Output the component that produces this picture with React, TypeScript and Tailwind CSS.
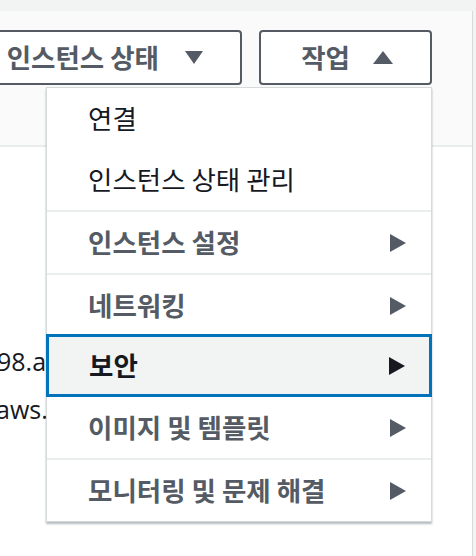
import React from "react";

const Down = () => (
  <svg width="18" height="13" viewBox="0 0 18 13" className="shrink-0">
    <polygon points="0,0 18,0 9,13" fill="#545b64" />
  </svg>
);
const Up = () => (
  <svg width="20" height="13" viewBox="0 0 20 13" className="shrink-0">
    <polygon points="0,13 20,13 10,0" fill="#545b64" />
  </svg>
);
const Right = ({ color }: { color: string }) => (
  <svg width="16" height="18" viewBox="0 0 16 18" className="shrink-0">
    <polygon points="0,0 16,9 0,18" fill={color} />
  </svg>
);

type Item = { label: string; sub?: boolean; active?: boolean };

const MenuItem = ({ item }: { item: Item }) => {
  if (item.active) {
    return (
      <div className="-mx-px h-[63px] -mt-[2px] flex items-center justify-between pl-[40px] pr-[24px] bg-[#f2f3f3] border-[3px] border-[#0073bb] text-[#16191f] font-bold">
        <span>{item.label}</span>
        <Right color="#16191f" />
      </div>
    );
  }
  return (
    <div
      className={
        "h-[61px] flex items-center justify-between pl-[41px] pr-[25px] " +
        (item.sub ? "font-bold text-[#545b64]" : "font-normal text-[#16191f]")
      }
    >
      <span>{item.label}</span>
      {item.sub && <Right color="#545b64" />}
    </div>
  );
};

const Divider = () => <div className="h-[2px] bg-[#eaeded]" />;

export default function App() {
  return (
    <div className="w-[476px] h-[556px] overflow-hidden bg-[#f2f3f3] pt-[11px] font-['Noto_Sans_CJK_KR','Noto_Sans',sans-serif]">
      <div className="relative w-[473px] h-[545px] bg-white border-r border-[#d5dbdb]">
        <div className="h-[136px] bg-[#fafafa] border-b-2 border-[#eaeded] flex items-start pt-[19px] gap-[17px]">
          <button className="ml-[-30px] w-[272px] h-[55px] border-2 border-[#545b64] rounded-[4px] bg-white flex items-center justify-end gap-[26px] pr-[37px] text-[26.5px] font-bold text-[#545b64] leading-none whitespace-nowrap">
            <span>인스턴스 상태</span>
            <Down />
          </button>
          <button className="w-[173px] h-[55px] border-2 border-[#545b64] rounded-[4px] bg-white flex items-center justify-end gap-[23px] pr-[37px] text-[26.5px] font-bold text-[#545b64] leading-none">
            <span>작업</span>
            <Up />
          </button>
        </div>

        <div className="pt-[190px] text-[25px] text-[#16191f] font-['Open_Sans','Noto_Sans',sans-serif] leading-[48px] whitespace-nowrap">
          <div className="ml-[-3px]">98.ap</div>
          <div className="ml-[-4px]">aws.c</div>
        </div>

        <div className="absolute left-[46px] top-[76px] w-[386px] bg-white border border-[#d5dbdb] shadow-[0_2px_2px_rgba(0,28,36,0.3)] text-[26.5px] leading-none">
          <MenuItem item={{ label: "연결" }} />
          <MenuItem item={{ label: "인스턴스 상태 관리" }} />
          <Divider />
          <MenuItem item={{ label: "인스턴스 설정", sub: true }} />
          <Divider />
          <MenuItem item={{ label: "네트워킹", sub: true }} />
          <MenuItem item={{ label: "보안", sub: true, active: true }} />
          <MenuItem item={{ label: "이미지 및 템플릿", sub: true }} />
          <Divider />
          <MenuItem item={{ label: "모니터링 및 문제 해결", sub: true }} />
        </div>
      </div>
    </div>
  );
}
